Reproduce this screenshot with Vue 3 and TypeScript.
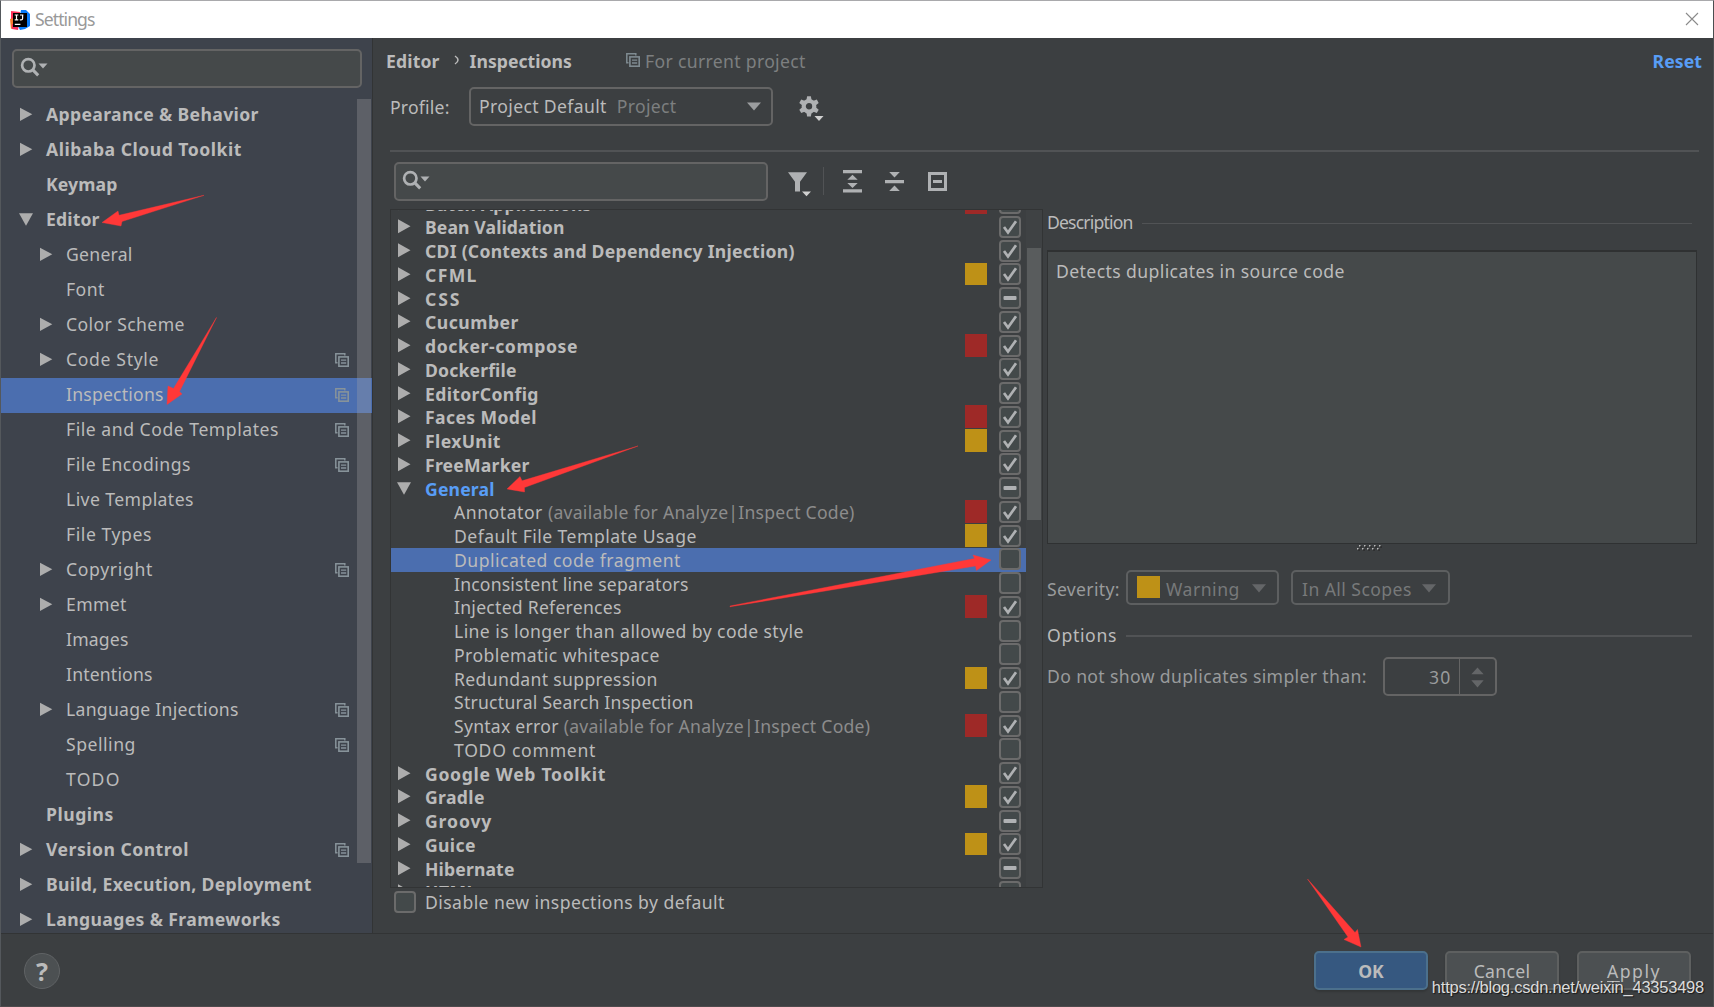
<script setup lang="ts">
import type { Directive } from 'vue'

interface NavItem {
  label: string
  w: number
  level: 0 | 1
  arrow?: 'right' | 'down'
  copy?: boolean
  selected?: boolean
}

interface Inspection {
  label: string
  w: number
  group?: boolean
  open?: boolean
  note?: boolean
  color?: 'red' | 'amber'
  state: 'on' | 'off' | 'mixed'
  selected?: boolean
}

// Tracks a label out (or in) so that it spans the given width in pixels.
const vFit: Directive<HTMLElement, number> = {
  mounted(el, { value }) {
    const n = (el.textContent ?? '').length
    const natural = el.getBoundingClientRect().width
    if (n > 1) el.style.letterSpacing = `${((value + 1.4 - natural) / (n - 1)).toFixed(3)}px`
  },
}

const nav: NavItem[] = [
  { label: 'Appearance & Behavior', w: 211, level: 0, arrow: 'right' },
  { label: 'Alibaba Cloud Toolkit', w: 194, level: 0, arrow: 'right' },
  { label: 'Keymap', w: 70, level: 0 },
  { label: 'Editor', w: 52, level: 0, arrow: 'down' },
  { label: 'General', w: 65, level: 1, arrow: 'right' },
  { label: 'Font', w: 37, level: 1 },
  { label: 'Color Scheme', w: 117, level: 1, arrow: 'right' },
  { label: 'Code Style', w: 91, level: 1, arrow: 'right', copy: true },
  { label: 'Inspections', w: 96, level: 1, copy: true, selected: true },
  { label: 'File and Code Templates', w: 211, level: 1, copy: true },
  { label: 'File Encodings', w: 123, level: 1, copy: true },
  { label: 'Live Templates', w: 126, level: 1 },
  { label: 'File Types', w: 84, level: 1 },
  { label: 'Copyright', w: 85, level: 1, arrow: 'right', copy: true },
  { label: 'Emmet', w: 59, level: 1, arrow: 'right' },
  { label: 'Images', w: 61, level: 1 },
  { label: 'Intentions', w: 85, level: 1 },
  { label: 'Language Injections', w: 171, level: 1, arrow: 'right', copy: true },
  { label: 'Spelling', w: 68, level: 1, copy: true },
  { label: 'TODO', w: 52, level: 1 },
  { label: 'Plugins', w: 66, level: 0 },
  { label: 'Version Control', w: 141, level: 0, arrow: 'right', copy: true },
  { label: 'Build, Execution, Deployment', w: 264, level: 0, arrow: 'right' },
  { label: 'Languages & Frameworks', w: 233, level: 0, arrow: 'right' },
]

const inspections: Inspection[] = [
  { label: 'Batch Applications', w: 165, group: true, color: 'red', state: 'off' },
  { label: 'Bean Validation', w: 138, group: true, state: 'on' },
  { label: 'CDI (Contexts and Dependency Injection)', w: 368, group: true, state: 'on' },
  { label: 'CFML', w: 50, group: true, color: 'amber', state: 'on' },
  { label: 'CSS', w: 33, group: true, state: 'mixed' },
  { label: 'Cucumber', w: 92, group: true, state: 'on' },
  { label: 'docker-compose', w: 151, group: true, color: 'red', state: 'on' },
  { label: 'Dockerfile', w: 90, group: true, state: 'on' },
  { label: 'EditorConfig', w: 112, group: true, state: 'on' },
  { label: 'Faces Model', w: 110, group: true, color: 'red', state: 'on' },
  { label: 'FlexUnit', w: 74, group: true, color: 'amber', state: 'on' },
  { label: 'FreeMarker', w: 103, group: true, state: 'on' },
  { label: 'General', w: 68, group: true, open: true, state: 'mixed' },
  { label: 'Annotator', w: 87, note: true, color: 'red', state: 'on' },
  { label: 'Default File Template Usage', w: 241, color: 'amber', state: 'on' },
  { label: 'Duplicated code fragment', w: 225, state: 'off', selected: true },
  { label: 'Inconsistent line separators', w: 233, state: 'off' },
  { label: 'Injected References', w: 166, color: 'red', state: 'on' },
  { label: 'Line is longer than allowed by code style', w: 348, state: 'off' },
  { label: 'Problematic whitespace', w: 204, state: 'off' },
  { label: 'Redundant suppression', w: 202, color: 'amber', state: 'on' },
  { label: 'Structural Search Inspection', w: 238, state: 'off' },
  { label: 'Syntax error', w: 103, note: true, color: 'red', state: 'on' },
  { label: 'TODO comment', w: 140, state: 'off' },
  { label: 'Google Web Toolkit', w: 179, group: true, state: 'on' },
  { label: 'Gradle', w: 58, group: true, color: 'amber', state: 'on' },
  { label: 'Groovy', w: 65, group: true, state: 'mixed' },
  { label: 'Guice', w: 49, group: true, color: 'amber', state: 'on' },
  { label: 'Hibernate', w: 88, group: true, state: 'mixed' },
  { label: 'HTML', w: 50, group: true, state: 'off' },
]

const pointers: string[] = [
  '102,222.5 118,211 119,215.3 204,195.3 122,221.5 121,226',
  '167,404.5 168,386 173.5,388.5 216.5,317.5 179.5,391.5 182,394',
  '507,489 520,476.5 522,480.8 638,446 524.5,487.5 524.5,492',
  '991,560 973,555 974.5,558.5 730,606 730,606.8 975.5,566 976.5,570.5',
  '1361,947 1357.5,929.5 1355,932.5 1307.5,879 1348,937 1344,939.5',
]
</script>

<template>
  <div class="window">
    <header class="titlebar">
      <svg class="logo" width="20" height="20" viewBox="0 0 20 20">
        <path d="M1 1l9 1-1 8-8 2z" fill="#ff315a" />
        <path d="M0 9l4-1 2 9-5 2z" fill="#f97a2e" />
        <path d="M2 14h7l-1 6-6-1z" fill="#f5315f" />
        <path d="M11 0l5 0 4 4v12l-5 3-5 1-2-4z" fill="#087cfa" />
        <rect x="3" y="3" width="14" height="14" fill="#000" />
        <path d="M4.7 5h3.6M4.7 9.8h3.6M6.5 5v5M10 5h3.4M12.6 5v3.5q0 1.4-1.5 1.4H9.8M4.8 14.3h5.6" fill="none" stroke="#fff" stroke-width="1.2" />
      </svg>
      <span v-fit="59" class="title">Settings</span>
      <svg class="close" width="14" height="14" viewBox="0 0 14 14"><path d="M1 1l12 12M13 1L1 13" stroke="#8a8a8a" stroke-width="1.1" /></svg>
    </header>

    <div class="body">
      <aside class="sidebar">
        <div class="search side-search">
          <svg width="30" height="22" viewBox="0 0 30 22">
            <circle cx="9.3" cy="8.3" r="6.2" fill="none" stroke="#afb1b3" stroke-width="2.7" />
            <path d="M13.6 12.6l5.6 5.8" stroke="#afb1b3" stroke-width="3" />
            <path d="M19.5 6.4h9L24 11.4z" fill="#afb1b3" />
          </svg>
        </div>
        <nav class="tree">
          <div v-for="item in nav" :key="item.label" class="nav-row" :class="['lv' + item.level, { selected: item.selected }]">
            <svg class="arrow" width="15" height="15" viewBox="0 0 15 15">
              <path v-if="item.arrow === 'right'" d="M1 .7L13.3 7.3 1 14z" fill="#adadad" />
              <path v-else-if="item.arrow === 'down'" d="M0 1.3h14L7 13.7z" fill="#adadad" />
            </svg>
            <span v-fit="item.w" class="text">{{ item.label }}</span>
            <svg v-if="item.copy" class="copy" width="14" height="14" viewBox="0 0 14 14">
              <path d="M2.5 9.8H.8V.8h9v1.7" fill="none" stroke="#87939a" stroke-width="1.5" />
              <rect x="3.9" y="3.9" width="9.3" height="9.3" fill="none" stroke="#87939a" stroke-width="1.6" />
              <path d="M6 7.2h5.2M6 10h5.2" stroke="#87939a" stroke-width="1.3" />
            </svg>
          </div>
          <i class="thumb"></i>
        </nav>
      </aside>

      <main class="content">
        <div class="crumbs">
          <b v-fit="52">Editor</b>
          <svg class="chev" width="6" height="10" viewBox="0 0 6 10"><path d="M1 1q3 2 3 4T1 9" fill="none" stroke="#bbb" stroke-width="1.5" /></svg>
          <b v-fit="101">Inspections</b>
          <svg class="crumb-copy" width="14" height="14" viewBox="0 0 14 14">
            <path d="M2.5 9.8H.8V.8h9v1.7" fill="none" stroke="#7f8b91" stroke-width="1.5" />
            <rect x="3.9" y="3.9" width="9.3" height="9.3" fill="none" stroke="#7f8b91" stroke-width="1.6" />
            <path d="M6 7.2h5.2M6 10h5.2" stroke="#7f8b91" stroke-width="1.3" />
          </svg>
          <span v-fit="159" class="dim">For current project</span>
          <b v-fit="48" class="reset">Reset</b>
        </div>

        <div class="profile">
          <div class="profile-label"><span v-fit="58">Profile:</span></div>
          <div class="combo profile-combo">
            <span v-fit="126">Project Default</span>
            <span v-fit="58" class="dim second">Project</span>
            <svg width="14" height="9" viewBox="0 0 14 9"><path d="M0 .5h14L7 8.5z" fill="#9b9d9f" /></svg>
          </div>
          <svg class="gear" width="26" height="26" viewBox="0 0 26 26">
            <g fill="#afb1b3">
              <path v-for="a in [0, 60, 120, 180, 240, 300]" :key="a" d="M7.3 5L8.1.2h3.8l.8 4.8z" :transform="`rotate(${a} 10 10.3)`" />
            </g>
            <circle cx="10" cy="10.3" r="5.3" fill="none" stroke="#afb1b3" stroke-width="4.2" />
            <path d="M15.5 20h9L20 25z" fill="#d0d0d0" />
          </svg>
        </div>
        <div class="rule"></div>

        <div class="columns">
          <section class="left">
            <div class="toolbar">
              <div class="search list-search">
                <svg width="30" height="22" viewBox="0 0 30 22">
                  <circle cx="9.3" cy="8.3" r="6.2" fill="none" stroke="#afb1b3" stroke-width="2.7" />
                  <path d="M13.6 12.6l5.6 5.8" stroke="#afb1b3" stroke-width="3" />
                  <path d="M19.5 6.4h9L24 11.4z" fill="#afb1b3" />
                </svg>
              </div>
              <svg class="filter" width="24" height="25" viewBox="0 0 24 25">
                <path d="M0 .3h19l-7 9.5v9.7H7V9.8z" fill="#afb1b3" />
                <path d="M14 19.5h9L18.5 24.3z" fill="#d0d0d0" />
              </svg>
              <i class="vsep"></i>
              <svg class="t-expand" width="19" height="23" viewBox="0 0 19 23">
                <path d="M0 0h19v3.3H0zM0 19.3h19v3.3H0zM4.3 9.8L9.5 4.8l5.2 5zM4.3 13L9.5 18l5.2-5z" fill="#afb1b3" />
              </svg>
              <svg class="t-collapse" width="19" height="19" viewBox="0 0 19 19">
                <path d="M0 8h19v3.2H0zM4.2 0h10.6L9.5 5.5zM4.2 19h10.6L9.5 13.5z" fill="#afb1b3" />
              </svg>
              <svg class="t-box" width="19" height="19" viewBox="0 0 19 19">
                <rect x="1.5" y="1.5" width="16" height="16" fill="none" stroke="#afb1b3" stroke-width="3" />
                <path d="M5 8h9v3H5z" fill="#afb1b3" />
              </svg>
            </div>

            <div class="list">
              <div class="rows">
                <div
                  v-for="row in inspections"
                  :key="row.label"
                  class="row"
                  :class="{ group: row.group, open: row.open, selected: row.selected }"
                >
                  <svg v-if="row.group" class="arrow" width="15" height="15" viewBox="0 0 15 15">
                    <path v-if="row.open" d="M0 1.3h14L7 13.7z" fill="#adadad" />
                    <path v-else d="M1 .3L13.5 7.2 1 14.2z" fill="#adadad" />
                  </svg>
                  <span v-fit="row.w" class="text">{{ row.label }}</span>
                  <span v-if="row.note" v-fit="305" class="note">(available for Analyze|Inspect Code)</span>
                  <i v-if="row.color" class="swatch" :class="row.color"></i>
                  <span class="check">
                    <svg width="22" height="22" viewBox="0 0 22 22">
                      <path v-if="row.state === 'on'" d="M5 11l4 5.5L17 5.3" fill="none" stroke="#afb1b3" stroke-width="2.7" />
                      <rect v-else-if="row.state === 'mixed'" x="4.5" y="9" width="13" height="4" rx="1" fill="#afb1b3" />
                    </svg>
                  </span>
                </div>
              </div>
              <div class="track"><i></i></div>
            </div>

            <div class="disable">
              <span class="check"></span>
              <span v-fit="298">Disable new inspections by default</span>
            </div>
          </section>

          <section class="right">
            <div class="heading desc"><span v-fit="85">Description</span><i></i></div>
            <div class="description"><span v-fit="287">Detects duplicates in source code</span></div>
            <svg class="grip" width="26" height="8" viewBox="0 0 26 8">
              <g v-for="n in 5" :key="n" :transform="`translate(${(n - 1) * 5} 0)`">
                <rect x="2" y="1" width="1.5" height="1.5" fill="#bbb" /><rect x="0" y="4" width="1.5" height="1.5" fill="#bbb" />
                <rect x="3.5" y="2" width="1" height="2" fill="#222" /><rect x="1.5" y="5" width="1" height="2" fill="#222" />
              </g>
            </svg>
            <div class="severity">
              <div class="soft"><span v-fit="71">Severity:</span></div>
              <div class="combo warn">
                <i class="swatch amber"></i>
                <span v-fit="72">Warning</span>
                <svg width="14" height="9" viewBox="0 0 14 9"><path d="M0 .3h14L7 8.5z" fill="#646668" /></svg>
              </div>
              <div class="combo scope">
                <span v-fit="108">In All Scopes</span>
                <svg width="14" height="9" viewBox="0 0 14 9"><path d="M0 .3h14L7 8.5z" fill="#646668" /></svg>
              </div>
            </div>
            <div class="heading options"><span v-fit="68">Options</span><i></i></div>
            <div class="simpler">
              <div class="soft"><span v-fit="318">Do not show duplicates simpler than:</span></div>
              <div class="spinner">
                <div class="value"><span v-fit="20">30</span></div>
                <svg width="36" height="37" viewBox="0 0 36 37"><path d="M11.5 16h13L18 9zM11.5 22.5h13L18 30z" fill="#646668" /></svg>
              </div>
            </div>
          </section>
        </div>
      </main>
    </div>

    <footer class="footer">
      <button class="help">?</button>
      <button class="btn primary">OK</button>
      <button class="btn"><span v-fit="55">Cancel</span></button>
      <button class="btn"><span v-fit="51"><u>A</u>pply</span></button>
    </footer>

    <svg class="pointers" width="1714" height="1007" viewBox="0 0 1714 1007">
      <polygon v-for="p in pointers" :key="p" :points="p" fill="#ff3838" stroke="#ff3838" stroke-width=".4" />
    </svg>
    <div class="watermark"><span v-fit="271">https://blog.csdn.net/weixin_43353498</span></div>
  </div>
</template>

<style>
body {
  margin: 0;
  background: #3c3f41;
  overflow: hidden;
}
</style>

<style scoped>
* {
  box-sizing: border-box;
}
.window {
  position: relative;
  display: flex;
  flex-direction: column;
  width: 1714px;
  height: 1007px;
  border-top: 1px solid #a9a9ac;
  border-left: 1px solid #54585c;
  border-right: 1px solid #4b4e50;
  border-bottom: 1px solid #4e4a4c;
  background: #3c3f41;
  color: #bbbbbb;
  font: 17.6px/24px "Noto Sans", "Open Sans", sans-serif;
  white-space: nowrap;
  overflow: hidden;
}
svg {
  display: block;
  flex: none;
}
.titlebar {
  display: flex;
  align-items: center;
  height: 37px;
  flex: none;
  padding: 0 14px 0 9px;
  background: #fff;
}
.title {
  margin: -2px 0 0 5px;
  color: #999;
}
.close {
  margin: -2px 0 0 auto;
}
.body {
  display: flex;
  height: 896px;
  flex: none;
  border-bottom: 1px solid #323435;
}
.sidebar {
  width: 372px;
  flex: none;
  padding-top: 11px;
  border-right: 1px solid #323435;
  background: #3e434c;
}
.search {
  display: flex;
  align-items: flex-start;
  border: 2px solid #646464;
  border-radius: 5px;
  background: #45494a;
  padding: 6px 0 0 5px;
}
.side-search {
  width: 350px;
  height: 39px;
  margin-left: 11px;
}
.tree {
  position: relative;
  height: 835px;
  margin-top: 10px;
  overflow: hidden;
}
.nav-row {
  display: flex;
  align-items: center;
  height: 35px;
  line-height: 35px;
  padding: 0 23px 0 18px;
}
.nav-row.lv0 {
  font-weight: 700;
}
.nav-row.lv1 {
  padding-left: 38px;
}
.nav-row .arrow {
  margin: -2px 12px 0 0;
}
.nav-row .text {
  margin-top: -3px;
}
.nav-row .copy {
  margin: -2px 0 0 auto;
}
.nav-row.selected,
.row.selected {
  background: #4b6eaf;
}
.thumb {
  position: absolute;
  top: 1px;
  right: 1px;
  width: 14px;
  height: 764px;
  background: rgba(166, 166, 166, 0.3);
}
.content {
  flex: 1;
  min-width: 0;
  padding-left: 13px;
}
.crumbs {
  display: flex;
  align-items: center;
  height: 45px;
  padding: 0 11px 0 0;
}
.chev {
  margin: -2px 10px 0 14px;
}
.crumb-copy {
  margin: -2px 5px 0 54px;
}
.dim {
  color: #7d7f80;
}
.reset {
  margin-left: auto;
  color: #589df6;
}
.profile {
  display: flex;
  height: 48px;
  padding-left: 4px;
}
.profile-label {
  width: 60px;
  margin: 12px 20px 0 0;
}
.combo {
  display: flex;
  align-items: center;
  border: 2px solid #646464;
  border-radius: 5px;
}
.profile-combo {
  width: 304px;
  height: 39px;
  margin: 4px 0 0 -1px;
  padding: 0 10px 2px 8px;
}
.combo svg {
  margin-left: auto;
}
.profile-combo svg {
  margin-top: 2px;
}
.second {
  margin-left: 10px;
}
.gear {
  margin: 13px 0 0 26px;
}
.rule {
  height: 2px;
  margin: 19px 14px 0 4px;
  background: #515355;
}
.columns {
  display: flex;
}
.left {
  width: 658px;
  flex: none;
  padding-left: 4px;
}
.toolbar {
  display: flex;
  height: 57px;
  padding: 10px 0 0 4px;
}
.list-search {
  width: 374px;
  height: 39px;
}
.filter {
  margin: 10px 0 0 20px;
}
.vsep {
  width: 1px;
  height: 28px;
  margin: 5px 0 0 11px;
  background: #515355;
}
.t-expand {
  margin: 8px 0 0 19px;
}
.t-collapse,
.t-box {
  margin: 10px 0 0 23px;
}
.t-box {
  margin-left: 24px;
}
.list {
  display: flex;
  width: 653px;
  height: 679px;
  border: 1px solid #323435;
  overflow: hidden;
}
.rows {
  width: 635px;
  margin-top: -18.4px;
  flex: none;
}
.row {
  display: flex;
  height: 23.75px;
  padding: 0 5px 0 63px;
  line-height: 25px;
}
.row.group {
  padding-left: 6px;
  font-weight: 700;
}
.row .arrow {
  margin: 4px 13px 0 0;
}
.row.open .text {
  color: #589df6;
}
.note {
  margin-left: 5px;
  color: #8c8c8c;
}
.swatch {
  width: 22px;
  height: 22.5px;
  flex: none;
}
.row .swatch {
  margin-left: auto;
}
.amber {
  background: #be9117;
}
.red {
  background: #9e2927;
}
.check {
  width: 22px;
  height: 22px;
  flex: none;
  border: 2px solid #6b6b6b;
  border-radius: 4px;
  background: #43494a;
}
.row .check {
  margin: 0.4px 0 0 auto;
}
.row .swatch + .check {
  margin-left: 12px;
}
.check svg {
  margin: -2px;
}
.track {
  flex: 1;
  padding: 38px 1px 0 1px;
  background: #3f4244;
}
.track i {
  display: block;
  height: 272px;
  background: #595c5d;
}
.disable {
  display: flex;
  align-items: center;
  gap: 9px;
  height: 28px;
  padding: 0 0 0 4px;
}
.right {
  flex: 1;
  min-width: 0;
  padding-left: 3px;
}
.heading {
  display: flex;
  align-items: center;
  height: 24px;
  margin-right: 21px;
}
.heading span {
  margin-top: -2px;
}
.heading i {
  flex: 1;
  height: 2px;
  margin: 0 0 0 9px;
  background: #515355;
}
.desc {
  margin-top: 59px;
}
.desc i {
  height: 1px;
}
.description {
  width: 650px;
  height: 294px;
  margin: 15px 0 0 0;
  padding: 7px 0 0 8px;
  border: 1px solid #2f3132;
  border-top-width: 2px;
  background: #45494a;
}
.grip {
  margin: 0 0 0 310px;
}
.severity {
  display: flex;
  height: 36px;
  margin-top: 18px;
}
.soft {
  color: #999b9c;
}
.severity .soft {
  width: 79px;
  margin-top: 7px;
}
.severity .combo {
  height: 35px;
  color: #77797a;
  border-color: #5d5f60;
}
.warn {
  width: 153px;
  padding: 0 11px 0 9px;
}
.warn .swatch {
  width: 23px;
  height: 22px;
  margin: -1px 6px 0 0;
}
.scope {
  width: 159px;
  margin-left: 12px;
  padding: 0 12px 0 9px;
}
.severity .combo span {
  margin-top: 2px;
}
.severity .combo svg {
  margin-top: 2px;
}
.options {
  margin-top: 18px;
}
.simpler {
  display: flex;
  margin-top: 9px;
}
.simpler .soft {
  width: 336px;
  margin-top: 7px;
}
.spinner {
  display: flex;
  width: 114px;
  height: 39px;
  border: 2px solid #646464;
  border-radius: 5px;
}
.value {
  width: 75px;
  padding: 6px 0 0 44px;
  color: #999b9c;
}
.spinner svg {
  height: 35px;
  border-left: 1px solid #646464;
}
.footer {
  display: flex;
  flex: 1;
  padding: 17px 22px 0 23px;
}
button {
  padding: 0;
  color: #bbb;
  font: inherit;
}
.help {
  width: 36px;
  height: 36px;
  margin: 2px auto 0 0;
  border: 1px solid #606365;
  border-radius: 50%;
  background: #4c5052;
  font-size: 25px;
  font-weight: 700;
  line-height: 33px;
}
.btn {
  width: 114px;
  height: 39px;
  margin-left: 17px;
  border: 2px solid #5e6060;
  border-radius: 5px;
  background: #4c5052;
  box-shadow: 0 2px 2px rgba(0, 0, 0, 0.15);
  line-height: 36px;
}
.btn:last-child {
  margin-left: 18px;
}
.btn.primary {
  border-color: #4c708c;
  background: #365880;
  font-weight: 700;
}
.btn u {
  text-underline-offset: 3px;
  text-decoration-thickness: 1px;
}
.pointers {
  position: absolute;
  top: -1px;
  left: -1px;
}
.watermark {
  position: absolute;
  right: 9px;
  bottom: 9px;
  color: #dcdcdc;
  font: 16.5px/20px "Liberation Sans", Arial, sans-serif;
  text-shadow: 1px 1px 1px rgba(0, 0, 0, 0.6);
}
</style>
